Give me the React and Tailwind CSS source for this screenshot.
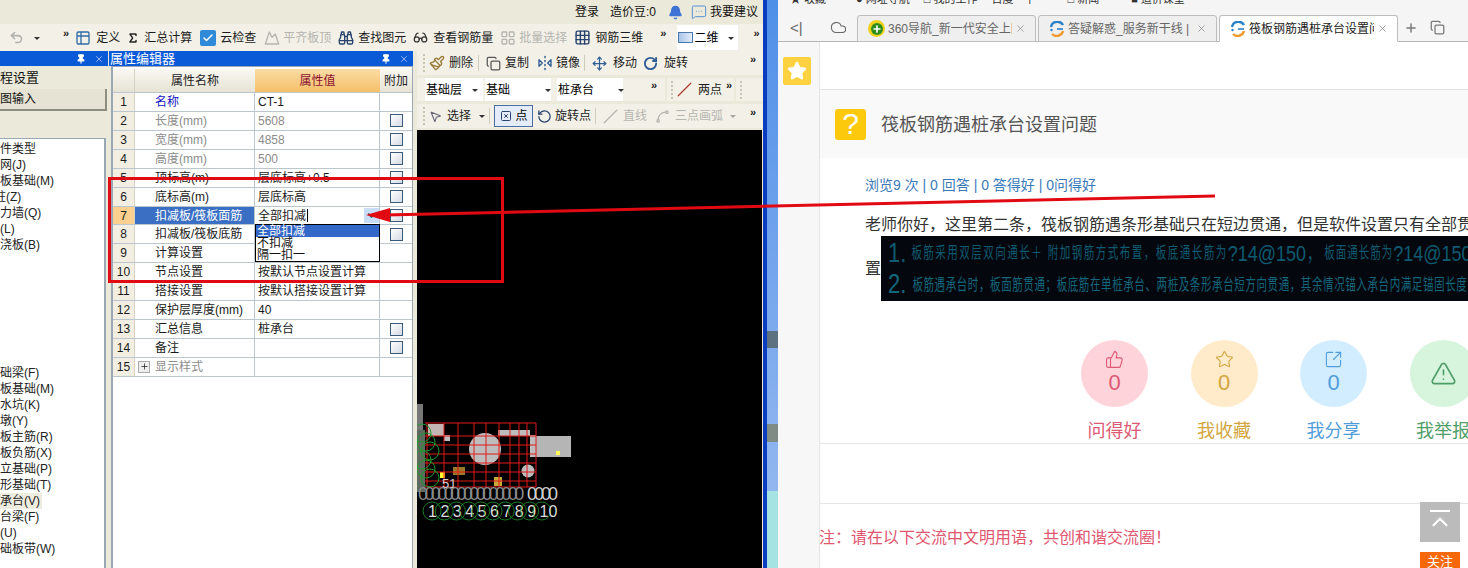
import {
  Sigma, Binoculars, Glasses, Undo2, Pin, X, Bell, MessageSquareMore, Paintbrush, Copy, FlipHorizontal2, Move,
  RotateCw, MousePointer2, SquareX, Slash, Spline, ThumbsUp, Star, SquareArrowOutUpRight, TriangleAlert, Plus,
  ChevronDown, Cloud, ChevronUp, Check, Mountain, LayoutGrid, Grid3x3, Table2, RotateCcw,
} from "lucide-react";

const tableRows = [
  { n: 1, name: "名称", value: "CT-1", blue: true },
  { n: 2, name: "长度(mm)", value: "5608", gray: true, check: true },
  { n: 3, name: "宽度(mm)", value: "4858", gray: true, check: true },
  { n: 4, name: "高度(mm)", value: "500", gray: true, check: true },
  { n: 5, name: "顶标高(m)", value: "层底标高+0.5", check: true },
  { n: 6, name: "底标高(m)", value: "层底标高", check: true },
  { n: 7, name: "扣减板/筏板面筋", value: "全部扣减", check: true, active: true },
  { n: 8, name: "扣减板/筏板底筋", value: "", check: true },
  { n: 9, name: "计算设置", value: "" },
  { n: 10, name: "节点设置", value: "按默认节点设置计算" },
  { n: 11, name: "搭接设置", value: "按默认搭接设置计算" },
  { n: 12, name: "保护层厚度(mm)", value: "40" },
  { n: 13, name: "汇总信息", value: "桩承台", check: true },
  { n: 14, name: "备注", value: "", check: true },
  { n: 15, name: "显示样式", value: "", gray: true, plus: true },
];

const treeTop = ["构件类型", "轴网(J)", "筏板基础(M)", "柱(Z)", "剪力墙(Q)", "梁(L)", "现浇板(B)"];
const treeBottom = ["基础梁(F)", "筏板基础(M)", "集水坑(K)", "柱墩(Y)", "筏板主筋(R)", "筏板负筋(X)", "独立基础(P)", "条形基础(T)", "桩承台(V)", "承台梁(F)", "桩(U)", "基础板带(W)"];

const stats = [
  { icon: ThumbsUp, label: "问得好", circle: "bg-[#ffd3da]", color: "text-[#dd5a75]", count: true },
  { icon: Star, label: "我收藏", circle: "bg-[#ffebc9]", color: "text-[#d3a63f]", count: true },
  { icon: SquareArrowOutUpRight, label: "我分享", circle: "bg-[#d2edff]", color: "text-[#4f9ddb]", count: true },
  { icon: TriangleAlert, label: "我举报", circle: "bg-[#d7f5dc]", color: "text-[#4f9d68]" },
];

const Chevrons = ({ className = "" }) => <span className={`text-[11px] leading-none font-bold text-[#222] ${className}`}>»</span>;
const Caret = () => <span className="ml-1 inline-block h-0 w-0 align-middle border-x-[3px] border-t-[3px] border-x-transparent border-t-[#333]" />;
const Grip = () => <span className="mx-1 h-[18px] w-0 border-l-2 border-dotted border-[#c8c5b5]" />;
const Sep = ({ className = "mx-1" }) => <span className={`h-[16px] w-px bg-[#cfccbc] ${className}`} />;

const Tool = ({ icon, label, dim, className = "" }) => (
  <div className={`flex items-center gap-[3px] whitespace-nowrap ${dim ? "text-[#b5b5b0]" : "text-[#1c1c1c]"} ${className}`}>
    {icon}
    <span>{label}</span>
  </div>
);

const PanelHead = ({ title, className = "" }) => (
  <div className={`flex h-[15px] items-center justify-between bg-[#0a5ad8] text-[13px] text-white ${className}`}>
    <span className="leading-none pl-[1px]">{title}</span>
    <div className="flex items-center gap-[8px] pr-[4px]">
      <Pin size={10} strokeWidth={2.5} fill="white" />
      <X size={10} className="text-[#a9c4ee]" />
    </div>
  </div>
);

const Checkbox = () => <span className="h-[13px] w-[13px] border border-[#3c5a7a] bg-gradient-to-br from-white to-[#d5dbe4]" />;

const PropRow = ({ row }) => (
  <div className="relative flex h-[18.93px] border-b border-[#bcc6cf] text-[12px] text-[#1a1a1a]">
    <div className={`flex w-[22px] items-center justify-center border-r border-[#d5d2c3] ${row.active ? "bg-[#fdd08f]" : "bg-[#f2efe2]"}`}>{row.n}</div>
    <div className={`flex w-[120px] items-center border-r border-[#bcc6cf] ${row.plus ? "pl-[3px]" : "pl-[20px]"} ${row.active ? "bg-[#3a6fc4] text-white" : ""} ${row.blue ? "text-[#1414c0]" : ""} ${row.gray ? "text-[#8c8c8c]" : ""}`}>
      {row.plus && <span className="mr-[5px] flex h-[12px] w-[12px] items-center justify-center border border-[#aaa] bg-[#eee] text-[#222]"><Plus size={9} strokeWidth={2} /></span>}
      {row.name}
    </div>
    <div className={`relative flex w-[125px] items-center border-r border-[#bcc6cf] pl-[3px] ${row.gray ? "text-[#8c8c8c]" : ""}`}>
      {row.value}
      {row.active && <span className="ml-[1px] h-[13px] w-px bg-black" />}
      {row.active && (
        <span className="absolute right-0 top-[1px] flex h-[15px] w-[15px] items-center justify-center rounded-[1px] bg-[#c9dcf5]">
          <ChevronDown size={11} strokeWidth={3.5} className="text-[#24405f]" />
        </span>
      )}
      {row.active && (
        <div className="absolute left-0 top-[17px] z-10 w-[125px] border border-black bg-white text-[12px] leading-[12.3px] text-[#111]">
          <div className="bg-[#3367c8] pl-[1px] text-white">全部扣减</div>
          <div className="pl-[1px]">不扣减</div>
          <div className="pl-[1px]">隔一扣一</div>
        </div>
      )}
    </div>
    <div className="flex flex-1 items-center justify-center">{row.check && <Checkbox />}</div>
  </div>
);

const TabLogo = () => (
  <svg width="16" height="16" viewBox="0 0 16 16" className="shrink-0">
    <path d="M2 6a6.5 6.5 0 0 1 12-2" fill="none" stroke="#2a7fc9" strokeWidth="2.4" />
    <path d="M14 10a6.5 6.5 0 0 1-11 3" fill="none" stroke="#ef9a2d" strokeWidth="2.4" />
    <circle cx="2.5" cy="9" r="1.2" fill="#2a7fc9" />
    <path d="M8 8h6" stroke="#2a7fc9" strokeWidth="1.6" />
  </svg>
);

const Logo360 = () => (
  <span className="flex h-[17px] w-[17px] shrink-0 items-center justify-center rounded-full bg-[#f2d21e]">
    <span className="flex h-[12px] w-[12px] items-center justify-center rounded-full bg-[#2f8f1c] text-white"><Plus size={10} strokeWidth={4} /></span>
  </span>
);

const Tab = ({ logo, title, active }) => (
  <div className={`relative -mb-px flex h-[27px] w-[179px] items-center gap-[3px] rounded-t-[3px] border border-[#bdbdbd] pl-[10px] pr-[9px] text-[12px] ${active ? "border-b-white bg-white text-[#222]" : "bg-[#efefef] text-[#666]"}`}>
    {logo}
    <span className="min-w-0 flex-1 overflow-hidden whitespace-nowrap">{title}</span>
    <X size={11} strokeWidth={1.6} className="shrink-0 text-[#888]" />
  </div>
);

// drawing on the black model view
const CadDrawing = () => {
  const xs = [427, 444, 458, 474, 486, 499, 510, 519, 527, 536];
  const ys = [421, 434, 443, 452, 461, 470, 479, 485];
  const nums = ["1", "2", "3", "4", "5", "6", "7", "8", "9", "10"];
  return (
    <svg className="absolute left-0 top-0" width="350" height="440" viewBox="417 128 350 440">
      <rect x="536" y="434" width="35" height="21" fill="#b5b5b5" />
      <rect x="556" y="449" width="4" height="4" fill="#ffff55" />
      <circle cx="485" cy="447" r="16" fill="#bdbdbd" />
      <circle cx="528" cy="469" r="6.5" fill="#bdbdbd" />
      <rect x="444" y="433" width="6" height="6" fill="#bdbdbd" />
      <rect x="428" y="422" width="16" height="12" fill="#c4b5b5" />
      <rect x="498" y="428" width="32" height="6" fill="#bdbdbd" />
      <rect x="530" y="433" width="6" height="22" fill="#bdbdbd" />
      <rect x="453" y="465" width="12" height="8" fill="#9a7a2a" />
      <rect x="494" y="475" width="8" height="9" fill="#c9a93a" />
      <rect x="440" y="470" width="5" height="6" fill="#ffff33" />
      <rect x="417" y="402" width="6" height="26" fill="#777" />
      <rect x="417" y="428" width="8" height="62" fill="#5f6a5f" />
      {xs.map((x) => <line key={x} x1={x} y1="421" x2={x} y2="485" stroke="#e01818" strokeWidth="1" />)}
      {ys.map((y) => <line key={y} x1="425" y1={y} x2="536" y2={y} stroke="#e01818" strokeWidth="1" />)}
      {[425, 434, 443, 452, 461, 470].map((y, i) => <circle key={y} cx={422 + (i % 3) * 4} cy={y + 6} r="9" fill="none" stroke="#1f9a2e" strokeWidth="1" />)}
      <text x="442" y="486" fill="#d5d5d5" fontSize="13">51</text>
      <text x="418" y="498" fill="#8a8a8a" fontSize="18" letterSpacing="-3.6">0000000000000000</text>
      <text x="527" y="498" fill="#cfcfcf" fontSize="18" letterSpacing="-3">0000</text>
      {nums.map((t, i) => (
        <g key={t}>
          <circle cx={432 + i * 12.2} cy="509" r="9" fill="none" stroke="#1f9a2e" strokeWidth="0.8" />
          <text x={428 + i * 12.4} y="515" fill="#dcdcdc" fontSize="16">{t}</text>
        </g>
      ))}
    </svg>
  );
};

export default function App() {
  return (
    <div className="relative flex h-[568px] w-[1468px] overflow-hidden bg-white text-[12px] [font-family:'Liberation_Sans','Noto_Sans_CJK_SC',sans-serif]">
      {/* GCL software window */}
      <div className="flex h-full w-[763px] shrink-0 flex-col bg-[#ebe9da]">
        <div className="flex h-[24px] items-center justify-end pr-[5px] text-[#111]">
          <span>登录</span>
          <span className="ml-[11px]">造价豆:0</span>
          <Bell size={15} fill="#3d74d6" className="ml-[12px] text-[#3d74d6]" />
          <MessageSquareMore size={16} strokeWidth={1.4} className="ml-[8px] text-[#4a8ad4]" />
          <span className="ml-[3px]">我要建议</span>
        </div>

        <div className="flex h-[27px] items-center bg-[#f3f1e7] pl-[9px]">
          <Undo2 size={15} strokeWidth={2.5} className="text-[#b0b0ac]" />
          <span className="ml-[6px]"><Caret /></span>
          <Chevrons className="ml-[23px] mb-2" />
          <Tool className="ml-[6px]" label="定义" icon={<Table2 size={16} className="mr-[2px] text-[#2e6aa8]" />} />
          <Tool className="ml-[7px]" label="汇总计算" icon={<Sigma size={12} strokeWidth={3} className="mr-[2px] text-[#222]" />} />
          <Tool className="ml-[8px]" label="云检查" icon={<span className="mr-[1px] flex h-[16px] w-[16px] items-center justify-center rounded-[2px] bg-[#2f8ad8] text-white"><Check size={12} strokeWidth={3} /></span>} />
          <Tool dim className="ml-[8px]" label="平齐板顶" icon={<Mountain size={16} />} />
          <Tool className="ml-[7px]" label="查找图元" icon={<Binoculars size={16} className="mr-[1px] text-[#27436e]" />} />
          <Tool className="ml-[7px]" label="查看钢筋量" icon={<Glasses size={15} className="mr-[2px] text-[#333]" />} />
          <Tool dim className="ml-[7px]" label="批量选择" icon={<LayoutGrid size={16} />} />
          <Tool className="ml-[7px]" label="钢筋三维" icon={<Grid3x3 size={17} className="mr-[1px] text-[#27436e]" />} />
          <Chevrons className="ml-[17px] mb-2" />
          <div className="ml-[11px] flex h-[25px] w-[61px] items-center whitespace-nowrap bg-white pl-[1px]">
            <span className="h-[11px] w-[15px] border border-[#4c78b0] bg-gradient-to-r from-[#a9c4ea] to-[#e2ecf8]" />
            <span className="ml-[1px]">二维</span>
            <span className="ml-[6px]"><Caret /></span>
          </div>
          <Chevrons className="ml-[15px] mb-2" />
        </div>

        <div className="flex min-h-0 flex-1">
          {/* module navigation, cut off at the page edge */}
          <div className="flex w-[109px] shrink-0 flex-col overflow-hidden">
            <PanelHead title="" className="mr-[1px]" />
            <div className="flex h-[23px] items-center text-[13px] text-[#111]">程设置</div>
            <div className="flex h-[22px] w-[107px] items-center border-b-2 border-r-2 border-[#8f8d80] bg-[#e6e3d4] text-[#111]">图输入</div>
            <div className="h-[27px]" />
            <div className="mr-[3px] flex-1 border-r-2 border-t border-[#9aa8b5] bg-white pt-[2px] text-[12px] leading-[16px] text-[#222]">
              <div className="-ml-[12px]">
                {treeTop.map((t) => <div key={t} className={`h-[16px] whitespace-nowrap ${t === "柱(Z)" ? "ml-[6px]" : ""}`}>{t}</div>)}
                <div className="h-[112px]" />
                {treeBottom.map((t) => (
                  <div key={t} className={`h-[16px] whitespace-nowrap ${t === "桩承台(V)" ? "w-[54px] bg-[#eeecdf]" : ""}`}>{t}</div>
                ))}
              </div>
            </div>
          </div>

          {/* property editor */}
          <div className="flex w-[304px] shrink-0 flex-col">
            <PanelHead title="属性编辑器" />
            <div className="ml-[2px] flex flex-1 flex-col border-l-2 border-r border-t border-[#9aa8b5] bg-white pt-[2px]">
              <div className="flex h-[24px] border-b border-[#bcc6cf] text-[12px] text-[#222]">
                <div className="w-[22px] border-r border-[#d5d2c3] bg-gradient-to-b from-[#f9f8f2] to-[#e6e3d5]" />
                <div className="flex w-[120px] items-center justify-center bg-gradient-to-b from-[#f9f8f2] to-[#e6e3d5]">属性名称</div>
                <div className="flex w-[125px] items-center justify-center bg-gradient-to-b from-[#fbdca4] to-[#f5bf68] text-[#8a1030]">属性值</div>
                <div className="flex flex-1 items-center justify-center bg-gradient-to-b from-[#f9f8f2] to-[#e6e3d5]">附加</div>
              </div>
              {tableRows.map((row) => <PropRow key={row.n} row={row} />)}
            </div>
          </div>

          {/* drawing toolbars and model view */}
          <div className="flex min-w-0 flex-1 flex-col pl-[4px]">
            <div className="flex h-[24px] items-center bg-[#f3f1e7] pl-[2px]">
              <Grip />
              <Tool label="删除" icon={<Paintbrush size={16} className="mr-[1px] text-[#9a7a3a]" />} />
              <Sep className="mx-[5px]" />
              <Tool className="ml-[2px]" label="复制" icon={<Copy size={15} className="mr-[1px] text-[#555]" />} />
              <Tool className="ml-[8px]" label="镜像" icon={<FlipHorizontal2 size={16} className="text-[#2f5f95]" />} />
              <Sep />
              <Tool className="ml-[3px]" label="移动" icon={<Move size={15} className="mr-[3px] text-[#2f5f95]" />} />
              <Tool className="ml-[6px]" label="旋转" icon={<RotateCw size={15} strokeWidth={3} className="mr-[3px] text-[#2f5f95]" />} />
              <Chevrons className="ml-auto mb-2 mr-[7px]" />
            </div>
            <div className="mt-[3px] flex h-[23px] items-center whitespace-nowrap">
              <div className="flex h-full w-[248px] items-center bg-[#f3f1e7] pl-[8px]">
                <div className="flex h-full w-[58px] items-center bg-white pl-[1px]">基础层<span className="ml-[6px]"><Caret /></span></div>
                <div className="ml-[2px] flex h-full w-[66px] items-center bg-white pl-[1px]">基础<span className="ml-[31px]"><Caret /></span></div>
                <div className="ml-[6px] flex h-full w-[66px] items-center bg-white pl-[1px]">桩承台<span className="ml-[20px]"><Caret /></span></div>
                <Chevrons className="ml-auto mb-2 mr-[8px]" />
              </div>
              <div className="ml-[2px] flex h-full w-[67px] items-center bg-[#f3f1e7]">
                <Grip />
                <Tool label="两点" icon={<Slash size={15} className="mr-[3px] text-[#b23a2a]" />} />
                <Chevrons className="ml-[4px] mb-2" />
              </div>
              <div className="ml-[2px] flex h-full flex-1 items-center bg-[#f3f1e7]"><Grip /></div>
            </div>
            <div className="mt-[3px] flex h-[24px] items-center bg-[#f3f1e7] pl-[2px]">
              <Grip />
              <Tool label="选择" icon={<MousePointer2 size={13} className="mr-[2px] text-[#667]" />} />
              <span className="ml-[4px]"><Caret /></span>
              <Sep />
              <div className="flex h-[22px] w-[39px] items-center justify-center gap-1 border border-[#4a6ea0] bg-[#e3ecf8]">
                <SquareX size={12} className="text-[#27436e]" />点
              </div>
              <Tool className="ml-[4px]" label="旋转点" icon={<RotateCcw size={15} className="text-[#27436e]" />} />
              <Sep />
              <Tool dim className="ml-[3px]" label="直线" icon={<Slash size={15} className="mr-[2px]" />} />
              <Tool dim className="ml-[8px]" label="三点画弧" icon={<Spline size={15} className="mr-[2px]" />} />
              <span className="ml-[3px] opacity-40"><Caret /></span>
              <Chevrons className="ml-auto mb-2 mr-[7px]" />
            </div>
            <div className="relative mt-[2px] mr-[1px] min-h-0 flex-1 overflow-hidden bg-black">
              <CadDrawing />
            </div>
          </div>
        </div>
      </div>

      {/* desktop edge between the two windows */}
      <div className="flex w-[15px] shrink-0">
        <div className="w-[4px] bg-[#0a3cc0]" />
        <div className="flex flex-1 flex-col bg-gradient-to-b from-[#4f8fe8] to-[#9cbdf0]">
          <div className="h-[331px]" />
          <div className="h-[17px] bg-[#5d7180]" />
          <div className="h-[76px]" />
          <div className="h-[18px] bg-[#7f8c86]" />
          <div className="h-[49px]" />
          <div className="flex-1 bg-[#a5e3e2]" />
        </div>
      </div>

      {/* browser window */}
      <div className="flex min-w-0 flex-1 flex-col bg-white">
        <div className="flex h-[14px] items-start overflow-hidden bg-[#f5f5f5] pl-[12px] text-[11px] leading-none text-[#333]">
          <span className="-mt-[6px]">★ 收藏</span>
          <span className="-mt-[6px] ml-[30px]">● 网址导航</span>
          <span className="-mt-[6px] ml-[14px]">□ 我的工作</span>
          <span className="-mt-[6px] ml-[14px]">百度一下</span>
          <span className="-mt-[6px] ml-[32px]">□ 新闻</span>
          <span className="-mt-[6px] ml-[32px]">■ 造价课堂</span>
        </div>
        <div className="flex h-[28px] items-end border-b border-[#b5b5b5] bg-[#f5f5f5]">
          <div className="flex h-[27px] w-[79px] shrink-0 items-center text-[#666]">
            <span className="ml-[12px] text-[15px] leading-none">&lt;|</span>
            <Cloud size={17} strokeWidth={1.5} className="ml-[27px]" />
          </div>
          <div className="flex gap-[2px]">
            <Tab logo={<Logo360 />} title="360导航_新一代安全上网" />
            <Tab logo={<TabLogo />} title="答疑解惑_服务新干线 | 网" />
            <Tab active logo={<TabLogo />} title="筏板钢筋遇桩承台设置问" />
          </div>
          <div className="flex h-[27px] items-center pl-[6px] text-[#777]">
            <Plus size={14} strokeWidth={2.5} />
            <Copy size={15} className="ml-[12px]" />
          </div>
        </div>

        <div className="flex min-h-0 flex-1">
          <div className="w-[42px] shrink-0 border-r border-[#e5e5e5] bg-[#f7f7f7] pl-[5px] pt-[15px]">
            <div className="flex h-[28px] w-[28px] items-center justify-center rounded-[2px] bg-[#fdd13f]">
              <Star size={20} fill="white" className="text-white" />
            </div>
          </div>
          <div className="flex min-w-0 flex-1 flex-col overflow-hidden">
            <div className="h-[48px] border-b border-[#e3e3e3]" />
            <div className="flex h-[68px] items-center bg-[#f9f9f9] pl-[15px]">
              <div className="flex h-[31px] w-[31px] items-center justify-center rounded-[3px] bg-[#fdc90c] text-[30px] font-light leading-none text-white">?</div>
              <span className="ml-[15px] pt-[3px] text-[18px] text-[#555]">筏板钢筋遇桩承台设置问题</span>
            </div>
            <div className="mt-[18px] pl-[45px] text-[14px] leading-[18px] text-[#3a7ab8]">浏览9 次 | 0 回答 | 0 答得好 | 0问得好</div>
            <div className="mt-[19px] whitespace-nowrap pl-[45px] text-[16px] leading-[24px] text-[#333]">老师你好，这里第二条，筏板钢筋遇条形基础只在短边贯通，但是软件设置只有全部贯通</div>
            <div className="-mt-px flex items-center whitespace-nowrap pl-[45px] text-[16px] text-[#333]">
              <span>置</span>
              <div className="h-[65px] w-[600px] shrink-0 overflow-hidden bg-[#04080e] pl-[7px] text-[#14667c]">
                <div className="flex h-[33px] items-center text-[#0f5a70]">
                  <span className="scale-y-125 text-[22px] font-light leading-none">1.</span>
                  <span className="ml-[5px] scale-y-150 text-[10.5px] leading-none tracking-[1.5px]">板筋采用双层双向通长＋ 附加钢筋方式布置，板底通长筋为</span>
                  <span className="scale-y-125 text-[18px] font-light leading-none">?14@150，</span>
                  <span className="scale-y-150 text-[10.5px] leading-none tracking-[1px]">板面通长筋为</span>
                  <span className="scale-y-125 text-[18px] font-light leading-none">?14@150</span>
                </div>
                <div className="flex h-[30px] items-center">
                  <span className="scale-y-125 text-[22px] font-light leading-none">2.</span>
                  <span className="ml-[6px] scale-y-150 text-[10.5px] leading-none tracking-[0.6px]">板筋遇承台时，板面筋贯通；板底筋在单桩承台、两桩及条形承台短方向贯通，其余情况锚入承台内满足锚固长度</span>
                </div>
              </div>
            </div>
            <div className="mt-[39px] flex gap-[42.5px] pl-[261px]">
              {stats.map(({ icon: Icon, label, circle, color, count }) => (
                <div key={label} className="flex w-[67px] shrink-0 flex-col items-center">
                  <div className={`flex h-[67px] w-[67px] flex-col items-center justify-center rounded-full ${circle} ${color}`}>
                    <Icon size={count ? 19 : 27} strokeWidth={1.4} />
                    {count && <span className="text-[22px] leading-[28px]">0</span>}
                  </div>
                  <span className={`mt-[12px] whitespace-nowrap text-[18px] leading-[24px] ${color}`}>{label}</span>
                </div>
              ))}
            </div>
            <div className="h-[61px] border-y border-[#e5e5e5]" />
            <div className="relative flex-1">
              <div className="-ml-px pt-[23px] text-[16px] leading-[22px] text-[#e0566f]">注：请在以下交流中文明用语，共创和谐交流圈！</div>
              <div className="absolute left-[600px] top-[-2px] flex h-[40px] w-[40px] flex-col items-center justify-center bg-[#bbb] text-white">
                <span className="h-[2px] w-[20px] bg-white" />
                <ChevronUp size={26} strokeWidth={2} className="-mt-[3px]" />
              </div>
              <div className="absolute left-[600px] top-[48px] flex h-[20px] w-[40px] items-start justify-center bg-[#f76809] text-[13px] leading-[20px] text-white">关注</div>
            </div>
          </div>
        </div>
      </div>

      {/* red annotation marks lying over both windows */}
      <div className="pointer-events-none absolute left-[108px] top-[177px] h-[106px] w-[396px] border-[3px] border-[#e20a12]" />
      <svg className="pointer-events-none absolute left-0 top-0" width="1468" height="568" viewBox="0 0 1468 568">
        <line x1="1215" y1="196" x2="385" y2="215" stroke="#e20a12" strokeWidth="3" />
        <path d="M366 215 L390 208 L390 222 Z" fill="#e20a12" />
      </svg>
    </div>
  );
}
